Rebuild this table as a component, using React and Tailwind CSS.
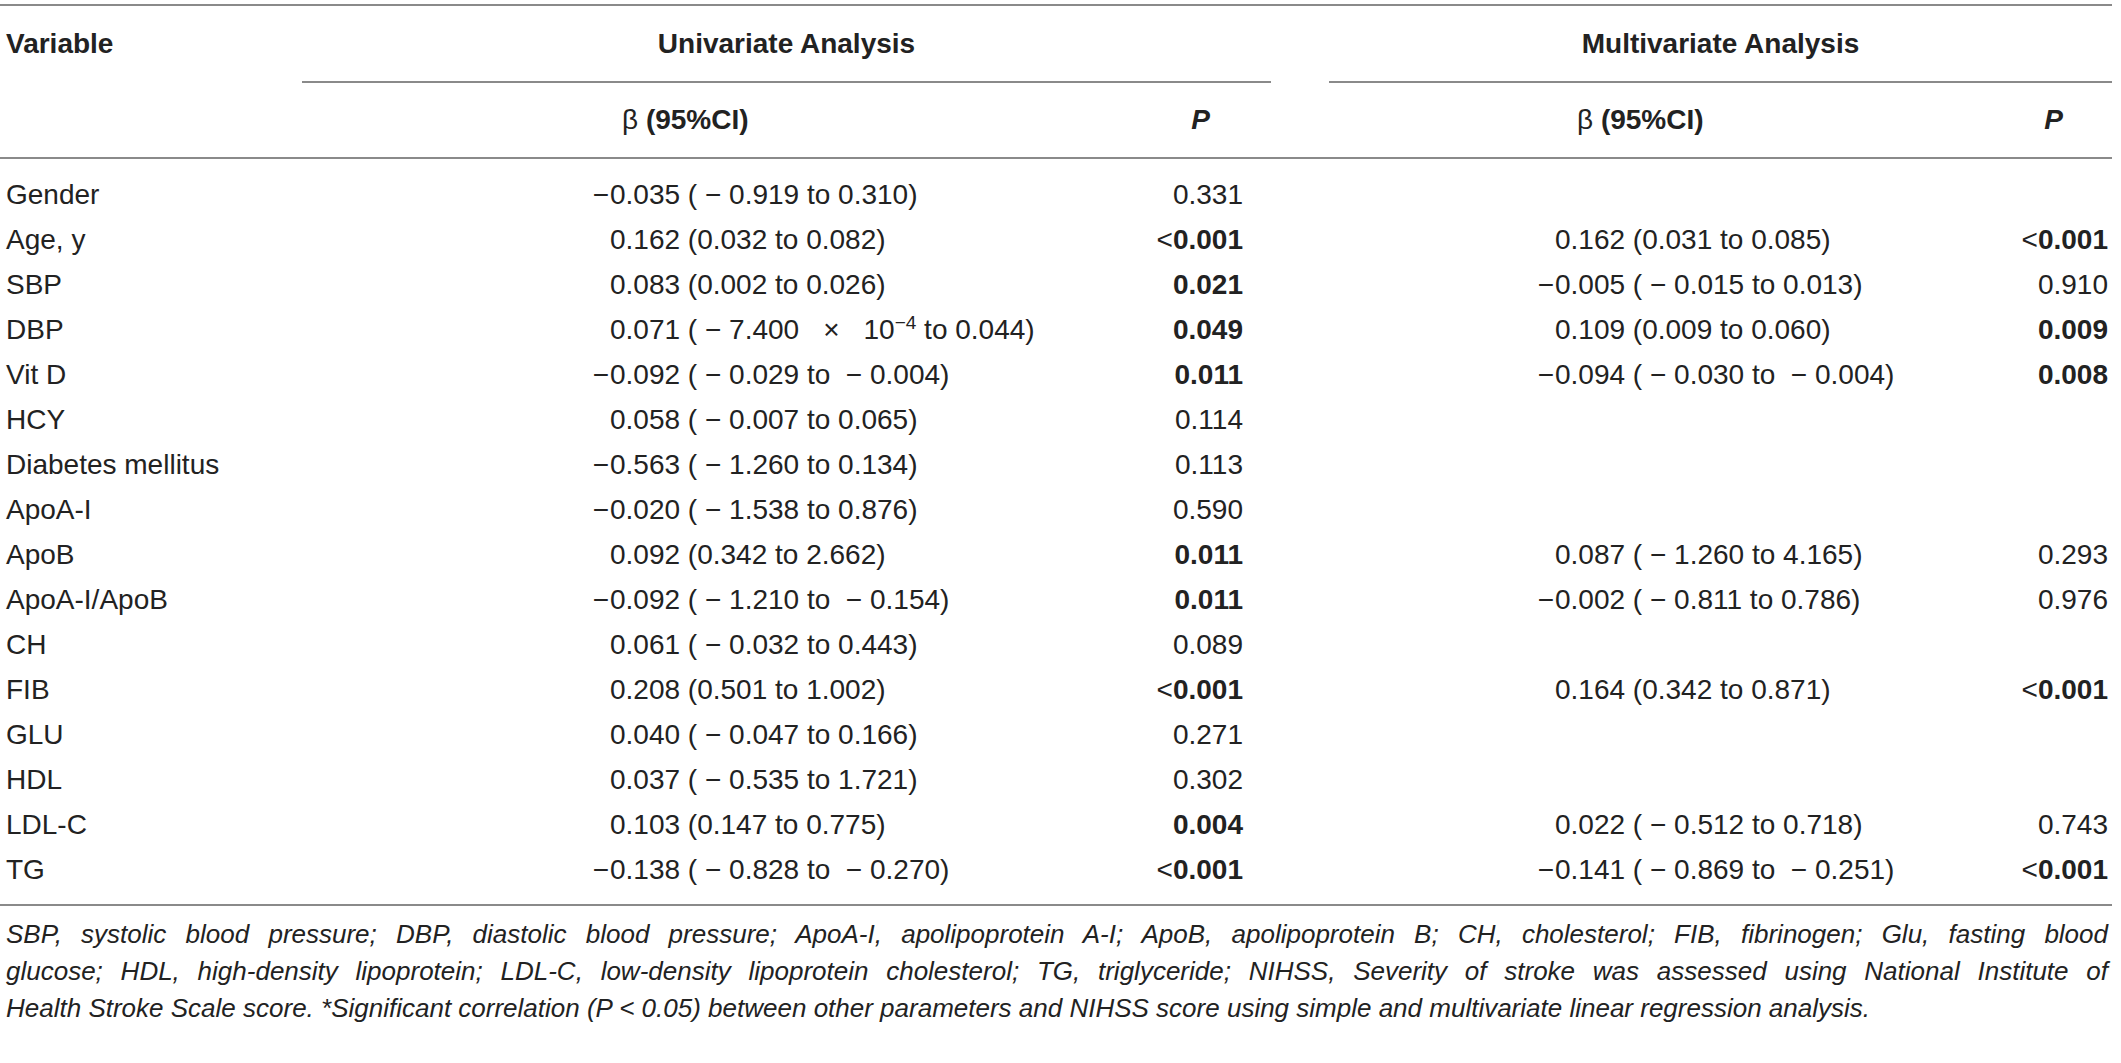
import React from "react";

const rows = [
  { v: "Gender", b1: "−0.035 ( − 0.919 to 0.310)", p1: { t: "0.331" } },
  { v: "Age, y", b1: "0.162 (0.032 to 0.082)", p1: { t: "0.001", lt: true, b: true }, b2: "0.162 (0.031 to 0.085)", p2: { t: "0.001", lt: true, b: true } },
  { v: "SBP", b1: "0.083 (0.002 to 0.026)", p1: { t: "0.021", b: true }, b2: "−0.005 ( − 0.015 to 0.013)", p2: { t: "0.910" } },
  { v: "DBP", b1: "SUP", p1: { t: "0.049", b: true }, b2: "0.109 (0.009 to 0.060)", p2: { t: "0.009", b: true } },
  { v: "Vit D", b1: "−0.092 ( − 0.029 to  − 0.004)", p1: { t: "0.011", b: true }, b2: "−0.094 ( − 0.030 to  − 0.004)", p2: { t: "0.008", b: true } },
  { v: "HCY", b1: "0.058 ( − 0.007 to 0.065)", p1: { t: "0.114" } },
  { v: "Diabetes mellitus", b1: "−0.563 ( − 1.260 to 0.134)", p1: { t: "0.113" } },
  { v: "ApoA-I", b1: "−0.020 ( − 1.538 to 0.876)", p1: { t: "0.590" } },
  { v: "ApoB", b1: "0.092 (0.342 to 2.662)", p1: { t: "0.011", b: true }, b2: "0.087 ( − 1.260 to 4.165)", p2: { t: "0.293" } },
  { v: "ApoA-I/ApoB", b1: "−0.092 ( − 1.210 to  − 0.154)", p1: { t: "0.011", b: true }, b2: "−0.002 ( − 0.811 to 0.786)", p2: { t: "0.976" } },
  { v: "CH", b1: "0.061 ( − 0.032 to 0.443)", p1: { t: "0.089" } },
  { v: "FIB", b1: "0.208 (0.501 to 1.002)", p1: { t: "0.001", lt: true, b: true }, b2: "0.164 (0.342 to 0.871)", p2: { t: "0.001", lt: true, b: true } },
  { v: "GLU", b1: "0.040 ( − 0.047 to 0.166)", p1: { t: "0.271" } },
  { v: "HDL", b1: "0.037 ( − 0.535 to 1.721)", p1: { t: "0.302" } },
  { v: "LDL-C", b1: "0.103 (0.147 to 0.775)", p1: { t: "0.004", b: true }, b2: "0.022 ( − 0.512 to 0.718)", p2: { t: "0.743" } },
  { v: "TG", b1: "−0.138 ( − 0.828 to  − 0.270)", p1: { t: "0.001", lt: true, b: true }, b2: "−0.141 ( − 0.869 to  − 0.251)", p2: { t: "0.001", lt: true, b: true } },
];

function Beta({ s }) {
  if (!s) return null;
  if (s === "SUP") {
    return (
      <>
        <span className="inline-block w-[24px]"></span>
        0.071 ( − 7.400<span className="inline-block px-[24px]">×</span>10
        <span className="align-super text-[19px] leading-none">−4</span> to 0.044)
      </>
    );
  }
  const neg = s.startsWith("−");
  return (
    <>
      <span className="inline-block w-[24px] text-right pr-[1px]">{neg ? "−" : ""}</span>
      {neg ? s.slice(1) : s}
    </>
  );
}

function PVal({ p }) {
  if (!p) return null;
  return (
    <>
      {p.lt && <span className="font-normal">&lt;</span>}
      <span className={p.b ? "font-bold" : "font-normal"}>{p.t}</span>
    </>
  );
}

const grid = "grid grid-cols-[302px_828px_141px_58px_666px_117px]";

export default function App() {
  return (
    <div className="w-[2121px] h-[1063px] bg-white text-[#222222] font-['Liberation_Sans',Arial,sans-serif] text-[28px]">
      <div className="w-[2112px] pt-[4px]">
        <div className="h-[2px] bg-[#8a8a8a]" />
        <div className={`${grid} h-[75px] items-center font-bold`}>
          <div className="pl-[6px]">Variable</div>
          <div className="col-span-2 text-center">Univariate Analysis</div>
          <div />
          <div className="col-span-2 text-center">Multivariate Analysis</div>
        </div>
        <div className={`${grid} h-[2px]`}>
          <div />
          <div className="col-span-2 bg-[#8a8a8a]" />
          <div />
          <div className="col-span-2 bg-[#8a8a8a]" />
        </div>
        <div className={`${grid} h-[74px] items-center font-bold`}>
          <div />
          <div className="pl-[320px] whitespace-pre"><span className="font-normal">β</span> (95%CI)</div>
          <div className="text-center italic">P</div>
          <div />
          <div className="pl-[248px] whitespace-pre"><span className="font-normal">β</span> (95%CI)</div>
          <div className="text-center italic">P</div>
        </div>
        <div className="h-[2px] bg-[#8a8a8a]" />
        <div className="pt-[13px] pb-[12px]">
          {rows.map((r) => (
            <div key={r.v} className={`${grid} h-[45px] leading-[45px]`}>
              <div className="pl-[6px] whitespace-nowrap">{r.v}</div>
              <div className="pl-[284px] whitespace-pre"><Beta s={r.b1} /></div>
              <div className="text-right pr-[28px] whitespace-nowrap"><PVal p={r.p1} /></div>
              <div />
              <div className="pl-[202px] whitespace-pre"><Beta s={r.b2} /></div>
              <div className="text-right pr-[4px] whitespace-nowrap"><PVal p={r.p2} /></div>
            </div>
          ))}
        </div>
        <div className="h-[2px] bg-[#8a8a8a]" />
        <div className="pt-[10px] pl-[6px] pr-[4px] italic text-[26px] leading-[37px]">
          <div className="text-justify [text-align-last:justify]">
            SBP, systolic blood pressure; DBP, diastolic blood pressure; ApoA-I, apolipoprotein A-I; ApoB, apolipoprotein B; CH, cholesterol; FIB, fibrinogen; Glu, fasting blood
          </div>
          <div className="text-justify [text-align-last:justify]">
            glucose; HDL, high-density lipoprotein; LDL-C, low-density lipoprotein cholesterol; TG, triglyceride; NIHSS, Severity of stroke was assessed using National Institute of
          </div>
          <div>
            Health Stroke Scale score. *Significant correlation (P &lt; 0.05) between other parameters and NIHSS score using simple and multivariate linear regression analysis.
          </div>
        </div>
      </div>
    </div>
  );
}
